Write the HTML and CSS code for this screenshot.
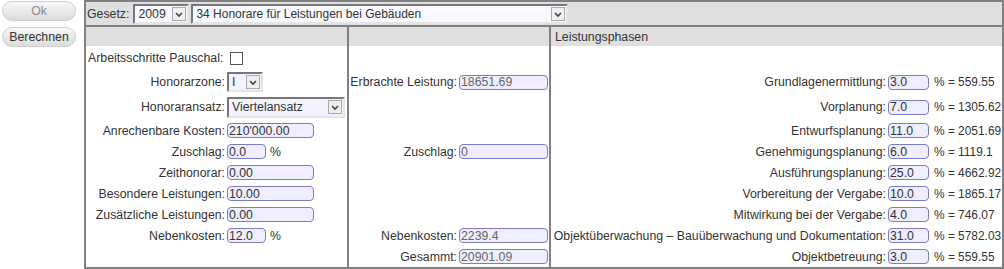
FILE: index.html
```html
<!DOCTYPE html>
<html lang="de">

<head>
    <meta charset="UTF-8">
    <meta name="viewport" content="width=device-width, initial-scale=1.0">
    <title>Honorarberechnung</title>
    <link rel="stylesheet" href="styles.css">
</head>

<body>
    <div class="page">
        <div class="actions">
            <button type="button" class="btn btn-ok">Ok</button>
            <button type="button" class="btn">Berechnen</button>
        </div>

        <div class="sheet">
            <div class="bar">
                <span>Gesetz:</span>
                <div class="select sel-year">
                    <span class="sel-value">2009</span>
                    <span class="sel-arrow"><svg viewBox="0 0 12 12"><path d="M3 5 L6 8 L9 5"/></svg></span>
                </div>
                <div class="select sel-law">
                    <span class="sel-value">34 Honorare für Leistungen bei Gebäuden</span>
                    <span class="sel-arrow"><svg viewBox="0 0 12 12"><path d="M3 5 L6 8 L9 5"/></svg></span>
                </div>
            </div>

            <!-- column headers -->
            <div class="head c1"></div>
            <div class="head c2"></div>
            <div class="head c3">Leistungsphasen</div>

            <!-- row: pauschal -->
            <div class="cell c1 plain">
                <span>Arbeitsschritte Pauschal:</span>
                <span class="check"></span>
            </div>
            <div class="cell c2"></div>
            <div class="cell c3"></div>

            <!-- row: honorarzone -->
            <div class="cell c1">
                <label class="lbl">Honorarzone:</label>
                <div class="select sel-zone">
                    <span class="sel-value">I</span>
                    <span class="sel-arrow"><svg viewBox="0 0 12 12"><path d="M3 5 L6 8 L9 5"/></svg></span>
                </div>
            </div>
            <div class="cell c2">
                <label>Erbrachte Leistung:</label>
                <input class="out" type="text" value="18651.69" readonly>
            </div>
            <div class="cell c3">
                <label>Grundlagenermittlung:</label>
                <input class="pct" type="text" value="3.0">
                <span class="res">% = 559.55</span>
            </div>

            <!-- row: honoraransatz -->
            <div class="cell c1">
                <label class="lbl">Honoraransatz:</label>
                <div class="select sel-rate">
                    <span class="sel-value">Viertelansatz</span>
                    <span class="sel-arrow"><svg viewBox="0 0 12 12"><path d="M3 5 L6 8 L9 5"/></svg></span>
                </div>
            </div>
            <div class="cell c2"></div>
            <div class="cell c3">
                <label>Vorplanung:</label>
                <input class="pct" type="text" value="7.0">
                <span class="res">% = 1305.62</span>
            </div>

            <!-- row: kosten -->
            <div class="cell c1">
                <label class="lbl">Anrechenbare Kosten:</label>
                <input class="num" type="text" value="210'000.00">
            </div>
            <div class="cell c2"></div>
            <div class="cell c3">
                <label>Entwurfsplanung:</label>
                <input class="pct" type="text" value="11.0">
                <span class="res">% = 2051.69</span>
            </div>

            <!-- row: zuschlag -->
            <div class="cell c1">
                <label class="lbl">Zuschlag:</label>
                <input class="short" type="text" value="0.0">
                <span class="unit">%</span>
            </div>
            <div class="cell c2">
                <label>Zuschlag:</label>
                <input class="out" type="text" value="0" readonly>
            </div>
            <div class="cell c3">
                <label>Genehmigungsplanung:</label>
                <input class="pct" type="text" value="6.0">
                <span class="res">% = 1119.1</span>
            </div>

            <!-- row: zeithonorar -->
            <div class="cell c1">
                <label class="lbl">Zeithonorar:</label>
                <input class="num" type="text" value="0.00">
            </div>
            <div class="cell c2"></div>
            <div class="cell c3">
                <label>Ausführungsplanung:</label>
                <input class="pct" type="text" value="25.0">
                <span class="res">% = 4662.92</span>
            </div>

            <!-- row: besondere -->
            <div class="cell c1">
                <label class="lbl">Besondere Leistungen:</label>
                <input class="num" type="text" value="10.00">
            </div>
            <div class="cell c2"></div>
            <div class="cell c3">
                <label>Vorbereitung der Vergabe:</label>
                <input class="pct" type="text" value="10.0">
                <span class="res">% = 1865.17</span>
            </div>

            <!-- row: zusaetzliche -->
            <div class="cell c1">
                <label class="lbl">Zusätzliche Leistungen:</label>
                <input class="num" type="text" value="0.00">
            </div>
            <div class="cell c2"></div>
            <div class="cell c3">
                <label>Mitwirkung bei der Vergabe:</label>
                <input class="pct" type="text" value="4.0">
                <span class="res">% = 746.07</span>
            </div>

            <!-- row: nebenkosten -->
            <div class="cell c1">
                <label class="lbl">Nebenkosten:</label>
                <input class="short" type="text" value="12.0">
                <span class="unit">%</span>
            </div>
            <div class="cell c2">
                <label>Nebenkosten:</label>
                <input class="out" type="text" value="2239.4" readonly>
            </div>
            <div class="cell c3">
                <label>Objektüberwachung – Bauüberwachung und Dokumentation:</label>
                <input class="pct" type="text" value="31.0">
                <span class="res">% = 5782.03</span>
            </div>

            <!-- row: gesammt -->
            <div class="cell c1"></div>
            <div class="cell c2">
                <label>Gesammt:</label>
                <input class="out" type="text" value="20901.09" readonly>
            </div>
            <div class="cell c3">
                <label>Objektbetreuung:</label>
                <input class="pct" type="text" value="3.0">
                <span class="res">% = 559.55</span>
            </div>
        </div>
    </div>
</body>

</html>
```

FILE: styles.css
```css
body {
    margin: 0;
    font-family: "Liberation Sans", Arial, sans-serif;
    font-size: 12.3px;
    color: #333;
    background-color: #fff;
}

.page {
    display: flex;
    align-items: flex-start;
}

/* buttons on the left */
.actions {
    width: 84px;
    display: flex;
    flex-direction: column;
    gap: 6px;
    padding: 1px 0 0 2px;
    box-sizing: border-box;
}

.btn {
    width: 74px;
    height: 20px;
    padding: 0;
    border: 1px solid #cfcfcf;
    border-radius: 10px;
    background: linear-gradient(#f7f7f7, #dcdcdc);
    font: inherit;
    color: #333;
    cursor: pointer;
}

.btn-ok {
    color: #8a8a8a;
}

/* main sheet */
.sheet {
    width: 920px;
    box-sizing: border-box;
    border: 2px solid #808080;
    display: grid;
    grid-template-columns: 261px 202px 1fr;
    grid-template-rows: 25px 19px 24px 24px 26px repeat(7, 21px);
}

.bar {
    grid-column: 1 / -1;
    display: flex;
    align-items: center;
    gap: 2px;
    padding-left: 1px;
    background-color: #dfdfdf;
    border-bottom: 2px solid #808080;
}

.head {
    background-color: #dfdfdf;
    display: flex;
    align-items: center;
    padding-left: 4px;
}

.c2, .c3 {
    border-left: 2px solid #808080;
}

.cell {
    display: flex;
    align-items: center;
    min-width: 0;
}

/* column 1 */
.cell.c1 label {
    width: 139px;
    margin-right: 2px;
    text-align: right;
    white-space: nowrap;
}

.cell.plain {
    padding-left: 2px;
}

.check {
    width: 11px;
    height: 11px;
    margin-left: 7px;
    border: 1px solid #555;
    background-color: #fff;
}

.unit {
    margin-left: 4px;
}

/* column 2 */
.cell.c2 {
    justify-content: flex-end;
    padding-right: 1px;
}

.cell.c2 label {
    margin-right: 2px;
}

/* column 3 */
.cell.c3 {
    justify-content: flex-end;
    overflow: hidden;
}

.cell.c3 label {
    margin-right: 2px;
    white-space: nowrap;
}

.res {
    flex: none;
    width: 68px;
    margin-left: 5px;
    font-size: 11.9px;
    white-space: nowrap;
}

/* inputs */
input {
    flex: none;
    height: 15px;
    box-sizing: border-box;
    padding: 0 1px;
    border: 1px solid #7b7bc6;
    border-radius: 4px;
    background-color: #eeeeff;
    font: inherit;
    line-height: 13px;
    color: #333;
    outline: none;
}

input.num {
    width: 87px;
}

input.short {
    width: 39px;
}

input.out {
    width: 89px;
    color: #666;
}

input.pct {
    width: 41px;
}

/* selects */
.select {
    display: flex;
    align-items: center;
    box-sizing: border-box;
    border: 2px solid;
    border-color: #777 #e4e4e4 #e4e4e4 #777;
    background-color: #f3f3ff;
    cursor: default;
}

.sel-value {
    flex: 1;
    padding-left: 3px;
    white-space: nowrap;
    overflow: hidden;
}

.sel-arrow {
    width: 14px;
    height: 14px;
    margin-right: 1px;
    box-sizing: border-box;
    border: 1px solid #aaa;
    background-color: #efefef;
    display: flex;
}

.sel-arrow svg {
    width: 12px;
    height: 12px;
}

.sel-arrow path {
    fill: none;
    stroke: #444;
    stroke-width: 1.6;
}

.sel-year {
    width: 56px;
    height: 20px;
    margin-left: 2px;
    background-color: #f8f8ff;
}

.sel-law {
    width: 377px;
    height: 20px;
    font-size: 12px;
    background-color: #f8f8ff;
}

.sel-zone {
    width: 36px;
    height: 20px;
}

.sel-rate {
    width: 118px;
    height: 21px;
}
```
